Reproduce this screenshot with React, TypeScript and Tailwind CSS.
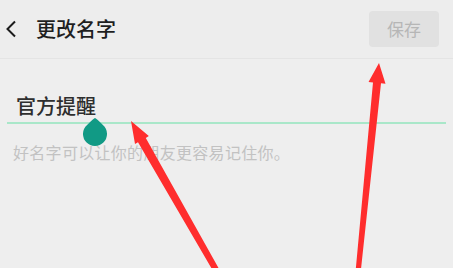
import React from "react";

export default function App() {
  return (
    <div
      className="relative w-[453px] h-[268px] overflow-hidden bg-[#eeeeee]"
      style={{ fontFamily: '"Noto Sans CJK SC", "Noto Sans", sans-serif' }}
    >
      <header className="h-[59px] flex items-center bg-[#ededed] border-b border-[#e4e4e4] pl-[5px] pr-[14px]">
        <svg width="12" height="18" viewBox="0 0 12 18" className="shrink-0">
          <path d="M10 1.5 L2.5 9 L10 16.5" fill="none" stroke="#1c1c1c" strokeWidth="2" />
        </svg>
        <span className="ml-[19px] text-[20px] leading-[28px] font-medium text-[#1f1f1f]">更改名字</span>
        <button className="ml-auto w-[70px] h-[36px] rounded-[4px] bg-[#e1e1e1] text-[#b6b6b6] text-[17px] leading-[36px]">
          保存
        </button>
      </header>
      <div className="px-[7px]">
        <div className="mt-[33px] pl-[9px] text-[20px] leading-[28px] font-medium text-[#2e2e2e]">官方提醒</div>
        <div className="relative mt-[2px] h-[2px] bg-[#a9e7c9]">
          <svg width="24" height="28" viewBox="0 0 24 28" className="absolute left-[76px] top-[-4px]">
            <path d="M12 0 Q13 0 19.94 7 A12 12 0 1 1 4.06 7 Q11 0 12 0 Z" fill="#119a85" />
          </svg>
        </div>
        <div className="mt-[17px] pl-[6px] text-[16px] leading-[22px] tracking-[0.3px] text-[#c2c2c2]">好名字可以让你的朋友更容易记住你。</div>
      </div>
      <svg className="absolute left-0 top-0 pointer-events-none" width="453" height="268" viewBox="0 0 453 268">
        <polygon
          points="131,121 148.8,136.1 145.8,137.9 224.4,278.5 219.2,281.5 138,142.3 135,144.1"
          fill="#ff2d2d"
        />
        <polygon
          points="379,63 385.5,83.7 381,83.3 359.8,280.2 354.8,279.8 373,82.5 368.5,82"
          fill="#ff2d2d"
        />
      </svg>
    </div>
  );
}
